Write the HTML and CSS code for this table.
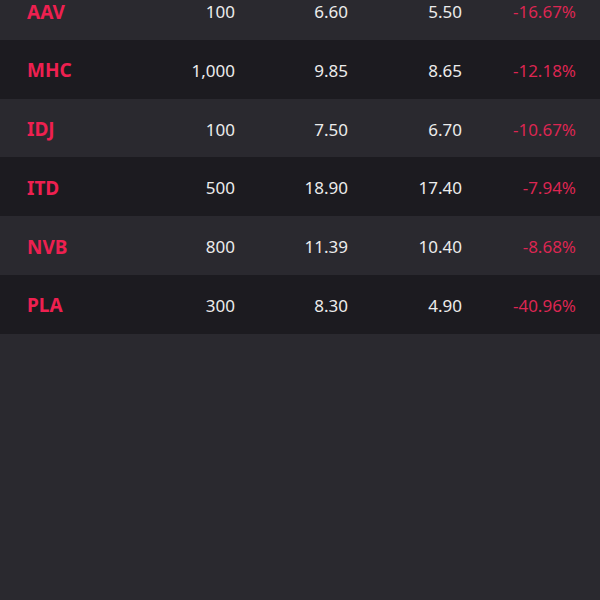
FILE: index.html
```html
<!DOCTYPE html>
<html>
<head>
<meta charset="utf-8">
<link rel="stylesheet" href="styles.css">
</head>
<body>
<div class="table">
  <div class="row light"><span class="sym">AAV</span><span class="num">100</span><span class="num">6.60</span><span class="num">5.50</span><span class="pct">-16.67%</span></div>
  <div class="row dark"><span class="sym">MHC</span><span class="num">1,000</span><span class="num">9.85</span><span class="num">8.65</span><span class="pct">-12.18%</span></div>
  <div class="row light"><span class="sym">IDJ</span><span class="num">100</span><span class="num">7.50</span><span class="num">6.70</span><span class="pct">-10.67%</span></div>
  <div class="row dark"><span class="sym">ITD</span><span class="num">500</span><span class="num">18.90</span><span class="num">17.40</span><span class="pct">-7.94%</span></div>
  <div class="row light"><span class="sym">NVB</span><span class="num">800</span><span class="num">11.39</span><span class="num">10.40</span><span class="pct">-8.68%</span></div>
  <div class="row dark"><span class="sym">PLA</span><span class="num">300</span><span class="num">8.30</span><span class="num">4.90</span><span class="pct">-40.96%</span></div>
</div>
</body>
</html>
```
FILE: styles.css
```css
html, body {
  margin: 0;
  padding: 0;
  background: #2a292f;
  height: 600px;
  overflow: hidden;
}
body {
  font-family: "Noto Sans", "Open Sans", sans-serif;
}
.table {
  margin-top: -18.6px;
}
.row {
  height: 58.7px;
  box-sizing: border-box;
  display: grid;
  grid-template-columns: 140px 68px 113px 114px 114px;
  padding: 2px 24px 0 27px;
  align-items: center;
  font-size: 17px;
  color: #ececec;
}
.light { background: #2a292f; }
.dark { background: #1c1b20; }
.sym {
  color: #ee2050;
  font-weight: 700;
  font-size: 19px;
}
.num, .pct { text-align: right; }
.pct { color: #dc2652; }
```
